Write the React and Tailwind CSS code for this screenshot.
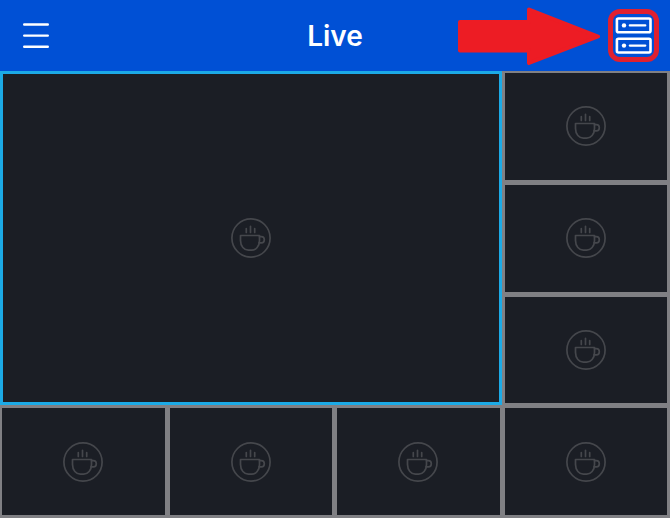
const sideCameras = [2, 3, 4];
const bottomCameras = [5, 6, 7, 8];

function CupIcon() {
  return (
    <svg
      viewBox="0 0 40 40"
      className="size-10 text-[#45474c]"
      fill="none"
      stroke="currentColor"
      strokeWidth="1.7"
      strokeLinecap="round"
      strokeLinejoin="round"
      aria-hidden="true"
    >
      <circle cx="20" cy="20" r="19.1" />
      <path d="M9.5 17.5h19v5c0 5.7-3.7 9.7-7.800 9.700h-3.400c-4.100 0-7.800-4-7.800-9.700z" />
      <path d="M28.5 18.7h1.900c1.800 0 2.900 1.200 2.900 3s-1.100 3.200-2.900 3.200h-2.400" />
      <path d="M15.300 10.500v4M19.500 8.300v6.200M23.700 10.500v4" />
    </svg>
  );
}

function Camera({ id }) {
  return (
    <button
      type="button"
      aria-label={`Camera ${id}`}
      className="flex items-center justify-center border-2 border-[#808084] bg-[#1b1e25]"
    >
      <CupIcon />
    </button>
  );
}

function Header() {
  return (
    <header className="grid grid-cols-[1fr_auto_1fr] items-center bg-[#0050d5] px-[11px] py-[9px] text-white">
      <button type="button" aria-label="Menu" className="justify-self-start p-3">
        <svg
          viewBox="0 0 26 26"
          className="h-[26px] w-[26px]"
          stroke="currentColor"
          strokeWidth="2.4"
          strokeLinecap="round"
          aria-hidden="true"
        >
          <path d="M1.200 1.500h23.600M1.200 12.600h23.600M1.200 23.800h23.600" />
        </svg>
      </button>

      <h1 className="font-['Inter',sans-serif] text-[28px] leading-9 font-semibold">
        Live
      </h1>

      <div className="flex items-center gap-2 justify-self-end">
        {/* Arrow pointing at the device list */}
        <svg
          viewBox="0 0 142 58"
          className="-my-1 h-[58px] w-[142px] text-[#ed1c24]"
          fill="currentColor"
          stroke="currentColor"
          strokeWidth="4"
          strokeLinejoin="round"
          aria-hidden="true"
        >
          <path d="M2 15h69V2.500l69 27-69 26.500V43.500H2z" />
        </svg>

        <button
          type="button"
          aria-label="Devices"
          className="flex h-[53px] w-[51px] items-center justify-center rounded-xl border-[5px] border-[#e0202f]"
        >
          <svg
            viewBox="0 0 37 37"
            className="h-[37px] w-[37px] shrink-0"
            fill="none"
            stroke="currentColor"
            strokeWidth="2.600"
            strokeLinecap="round"
            aria-hidden="true"
          >
            <rect x="1.900" y="1.500" width="33.600" height="13.800" rx="1.500" />
            <rect x="1.900" y="21.700" width="33.600" height="13.800" rx="1.500" />
            <path d="M14.800 8.400h15.500M14.800 28.600h15.500" strokeWidth="2.200" />
            <circle cx="9" cy="8.400" r="2.200" fill="currentColor" stroke="none" />
            <circle cx="9" cy="28.600" r="2.200" fill="currentColor" stroke="none" />
          </svg>
        </button>
      </div>
    </header>
  );
}

function App() {
  return (
    <div className="flex min-h-screen flex-col bg-[#1b1e25]">
      <Header />
      <main className="grid flex-1 grid-cols-4 grid-rows-4 gap-px bg-[#808084] pr-px pb-px">
        <button
          type="button"
          aria-label="Camera 1"
          className="col-span-3 row-span-3 flex items-center justify-center border-[3px] border-[#1caae6] bg-[#1b1e25]"
        >
          <CupIcon />
        </button>
        {sideCameras.map((id) => (
          <Camera key={id} id={id} />
        ))}
        {bottomCameras.map((id) => (
          <Camera key={id} id={id} />
        ))}
      </main>
    </div>
  );
}

export default App;
